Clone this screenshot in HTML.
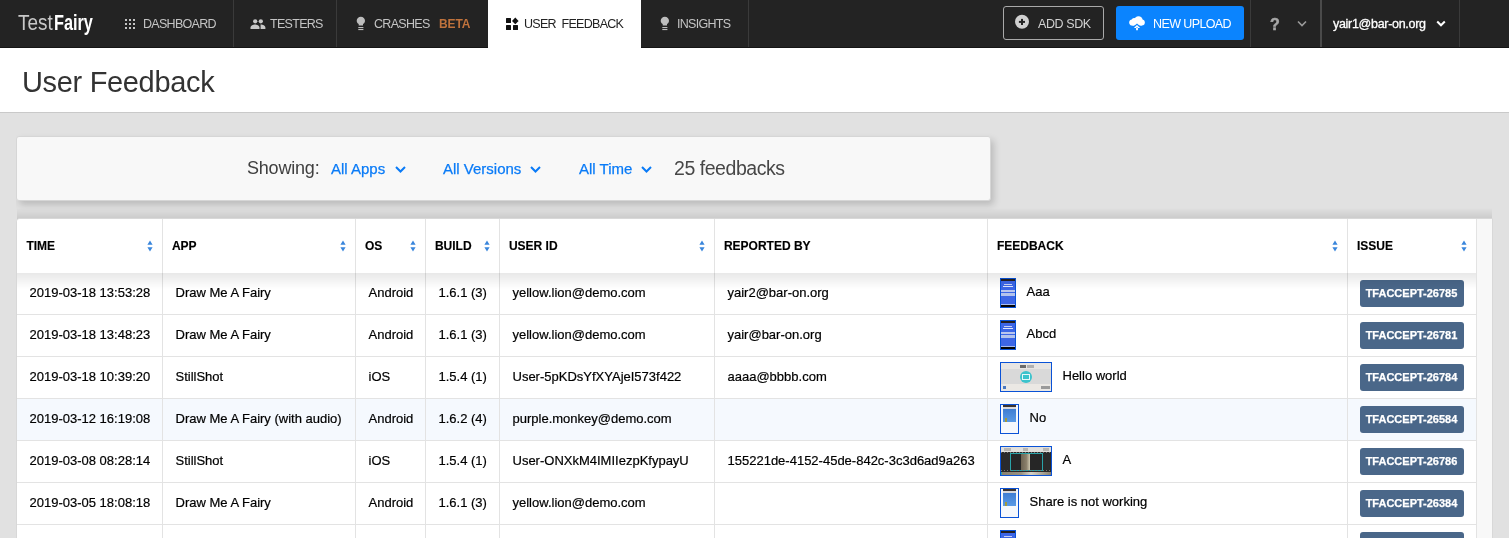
<!DOCTYPE html>
<html><head><meta charset="utf-8">
<style>
*{box-sizing:border-box;margin:0;padding:0}
html,body{width:1509px;height:538px;overflow:hidden;background:#e1e1e1;font-family:"Liberation Sans",sans-serif;position:relative}
.abs{position:absolute;white-space:pre}
#nav{position:absolute;left:0;top:0;width:1509px;height:48px;background:#232323;border-bottom:1px solid #151515}
.vd{position:absolute;top:0;width:1px;height:47px;background:#3a3a3a}
.ni{position:absolute;top:17px;font-size:12.5px;line-height:14px;color:#c4c4c4;letter-spacing:-0.7px;white-space:pre}
#hdr{position:absolute;left:0;top:48px;width:1509px;height:65px;background:#fff;border-bottom:1px solid #c9c9c9}
#filter{position:absolute;left:16px;top:136px;width:975px;height:65px;background:#f8f8f8;border:1px solid #d6d6d6;border-radius:3px;box-shadow:3px 4px 7px rgba(0,0,0,0.17)}
.link{color:#0a7bf7;-webkit-text-stroke:0.25px #0a7bf7}
.chev{position:absolute}
#tbl{position:absolute;left:16px;top:218px;width:1477px;height:330px;background:#f8f8f8;border:1px solid #d8d8d8;border-radius:4px 0 0 0;overflow:hidden}
table{border-collapse:collapse;table-layout:fixed;position:absolute;left:0;top:0;background:#fff}
th{height:54px;text-align:left;font-size:12px;font-weight:bold;color:#000;-webkit-text-stroke:0.15px #000;padding:0 0 0 9.4px;border-left:1px solid #e3e3e3;position:relative;vertical-align:middle}
th:first-child{border-left:none}
td{height:42px;font-size:13px;color:#000;-webkit-text-stroke:0.2px #000;padding:0 0 2px 13px;border-left:1px solid #e3e3e3;border-bottom:1px solid #e3e3e3;vertical-align:middle;white-space:nowrap;overflow:hidden}
td:first-child{border-left:none;padding-left:12.5px}
tr.hl td{background:#f5f9fe}
tbody tr:first-child td{height:41px}
td:nth-child(7),td:nth-child(8){padding-left:12px}
.sort{position:absolute;right:9px;top:21px;width:6px;height:12px}
th:last-child .sort{right:9.5px}
.badge{display:inline-block;position:relative;top:1px;width:104px;height:27px;background:#4a6789;border-radius:3px;color:#fff;font-weight:bold;font-size:11px;line-height:27px;-webkit-text-stroke:0.25px #fff;text-align:center;vertical-align:middle}
.th1{display:inline-block;vertical-align:middle;border:1px solid #0a52d6;margin-right:11px;position:relative;top:1px}
.fb{vertical-align:middle;position:relative;top:-1px}
.th1 i{position:absolute;left:0;width:100%;display:block}
</style></head><body>
<div id="wrap" style="position:absolute;left:0;top:0;width:1509px;height:538px;will-change:transform">
<div id="nav">
  <div class="abs" style="left:18px;top:9.5px;font-size:22px;line-height:26px;color:#c8c8c8;transform-origin:0 0;transform:scaleX(0.86)">Test</div>
  <div class="abs" style="left:53.5px;top:9.5px;font-size:22px;line-height:26px;color:#fff;font-weight:bold;transform-origin:0 0;transform:scaleX(0.74)">Fairy</div>
  <!-- grid icon -->
  <svg class="abs" style="left:124px;top:18px" width="12" height="12" viewBox="0 0 12 12" fill="#c4c4c4">
    <rect x="1" y="1" width="2" height="2"/><rect x="5" y="1" width="2" height="2"/><rect x="9" y="1" width="2" height="2"/>
    <rect x="1" y="5" width="2" height="2"/><rect x="5" y="5" width="2" height="2"/><rect x="9" y="5" width="2" height="2"/>
    <rect x="1" y="9" width="2" height="2"/><rect x="5" y="9" width="2" height="2"/><rect x="9" y="9" width="2" height="2"/>
  </svg>
  <div class="ni" style="left:143px">DASHBOARD</div>
  <div class="vd" style="left:233px"></div>
  <!-- people icon -->
  <svg class="abs" style="left:250px;top:18px" width="16" height="12" viewBox="0 0 16 12" fill="#c8c8c8">
    <circle cx="5.2" cy="3.3" r="2.15"/><circle cx="10.8" cy="3.3" r="2.15"/>
    <path d="M0.5 11 V9.6 C0.5 7.6 3.2 6.5 5 6.5 C6.8 6.5 9.5 7.6 9.5 9.6 V11 Z"/>
    <path d="M10.5 6.6 C10.6 6.55 10.7 6.5 10.9 6.5 C12.7 6.5 15.4 7.6 15.4 9.6 V11 H10.6 V9.6 C10.6 8.4 10.6 7.4 10.5 6.6 Z"/>
  </svg>
  <div class="ni" style="left:270px">TESTERS</div>
  <div class="vd" style="left:336px"></div>
  <!-- bulb -->
  <svg class="abs" style="left:356px;top:16px" width="10" height="15" viewBox="0 0 10 15" fill="#bdbdbd">
    <path d="M4.85 0.7 C7.2 0.7 9 2.5 9 4.8 C9 6.3 8.2 7.5 7 8.1 V9.5 H2.7 V8.1 C1.5 7.5 0.7 6.3 0.7 4.8 C0.7 2.5 2.5 0.7 4.85 0.7 Z"/>
    <rect x="2.3" y="11" width="5.1" height="1.1"/><rect x="2.3" y="13" width="5.1" height="1.1"/>
  </svg>
  <div class="ni" style="left:374px">CRASHES</div>
  <div class="ni" style="left:439px;font-size:12px;font-weight:bold;color:#bf723c;letter-spacing:-0.1px">BETA</div>
  <div class="abs" style="left:488px;top:0;width:153px;height:48px;background:#fff"></div>
  <!-- widgets icon -->
  <svg class="abs" style="left:505px;top:17px" width="14" height="14" viewBox="0 0 14 14" fill="#111">
    <rect x="1" y="1" width="5" height="5" rx="0.5"/><rect x="1" y="8" width="5" height="5" rx="0.5"/><rect x="8" y="8" width="5" height="5" rx="0.5"/>
    <path d="M10.3 0.6 L13.6 3.9 L10.3 7.2 L7 3.9 Z"/>
  </svg>
  <div class="ni" style="left:524px;color:#222">USER  FEEDBACK</div>
  <svg class="abs" style="left:660px;top:16px" width="10" height="15" viewBox="0 0 10 15" fill="#bdbdbd">
    <path d="M4.85 0.7 C7.2 0.7 9 2.5 9 4.8 C9 6.3 8.2 7.5 7 8.1 V9.5 H2.7 V8.1 C1.5 7.5 0.7 6.3 0.7 4.8 C0.7 2.5 2.5 0.7 4.85 0.7 Z"/>
    <rect x="2.3" y="11" width="5.1" height="1.1"/><rect x="2.3" y="13" width="5.1" height="1.1"/>
  </svg>
  <div class="ni" style="left:677px">INSIGHTS</div>
  <div class="vd" style="left:748px"></div>

  <!-- ADD SDK -->
  <div class="abs" style="left:1003px;top:6px;width:101px;height:34px;border:1px solid #a9a9a9;border-radius:3px"></div>
  <svg class="abs" style="left:1014px;top:14px" width="16" height="16" viewBox="0 0 16 16">
    <circle cx="8" cy="7.8" r="7" fill="#d0d0d0"/><rect x="7" y="4.9" width="2" height="6.1" fill="#232323"/><rect x="4.9" y="6.9" width="6.1" height="2" fill="#232323"/>
  </svg>
  <div class="ni" style="left:1038px;color:#d2d2d2;letter-spacing:-0.4px">ADD SDK</div>
  <!-- NEW UPLOAD -->
  <div class="abs" style="left:1116px;top:6px;width:128px;height:34px;background:#0b84fe;border-radius:3px"></div>
  <svg class="abs" style="left:1128px;top:14px" width="18" height="18" viewBox="0 0 18 18">
    <g fill="#fff"><circle cx="4.3" cy="8.5" r="3.1"/><circle cx="10.5" cy="6.4" r="4.2"/><circle cx="13.8" cy="8.6" r="3"/><circle cx="6.2" cy="6.6" r="2.6"/><rect x="4.3" y="8" width="9.5" height="3.6"/></g>
    <path d="M9 9.4 L5.2 12.8 H12.8 Z" fill="#0b84fe"/>
    <path d="M9 10.9 L5.9 14 H12.1 Z M8.1 13.6 H9.9 V16.2 H8.1 Z" fill="#fff"/>
  </svg>
  <div class="ni" style="left:1153px;color:#fff;letter-spacing:-0.6px">NEW UPLOAD</div>
  <div class="vd" style="left:1250px"></div>
  <div class="ni" style="left:1270px;top:16px;font-size:16px;line-height:18px;font-weight:bold;color:#a8a8a8;-webkit-text-stroke:0.5px #a8a8a8">?</div>
  <svg class="abs" style="left:1297px;top:20px" width="10" height="8" viewBox="0 0 10 8"><path d="M1 1.5 L5 5.5 L9 1.5" stroke="#9a9a9a" stroke-width="1.6" fill="none"/></svg>
  <div class="vd" style="left:1320px;width:2px;background:#4a4a4a"></div>
  <div class="ni" style="left:1333px;color:#fff;letter-spacing:-0.3px;-webkit-text-stroke:0.3px #fff">yair1@bar-on.org</div>
  <svg class="abs" style="left:1436px;top:20px" width="10" height="8" viewBox="0 0 10 8"><path d="M1.2 1.5 L5 5.3 L8.8 1.5" stroke="#fff" stroke-width="2" fill="none"/></svg>
  <div class="vd" style="left:1459px"></div>
</div>

<div id="hdr">
  <div class="abs" style="left:22px;top:17.5px;font-size:29px;line-height:32px;color:#333;letter-spacing:-0.33px">User Feedback</div>
</div>

<div id="filter">
  <div class="abs" style="left:230px;top:20px;font-size:18px;line-height:22px;color:#404040;letter-spacing:-0.2px">Showing:</div>
  <div class="abs link" style="left:314px;top:23px;font-size:15px;line-height:18px">All Apps</div>
  <svg class="abs" style="left:378px;top:29px" width="11" height="8" viewBox="0 0 11 8"><path d="M1 1 L5.5 5.5 L10 1" stroke="#0a7bf7" stroke-width="2" fill="none"/></svg>
  <div class="abs link" style="left:426px;top:23px;font-size:15px;line-height:18px">All Versions</div>
  <svg class="abs" style="left:513px;top:29px" width="11" height="8" viewBox="0 0 11 8"><path d="M1 1 L5.5 5.5 L10 1" stroke="#0a7bf7" stroke-width="2" fill="none"/></svg>
  <div class="abs link" style="left:562px;top:23px;font-size:15px;line-height:18px">All Time</div>
  <svg class="abs" style="left:624px;top:29px" width="11" height="8" viewBox="0 0 11 8"><path d="M1 1 L5.5 5.5 L10 1" stroke="#0a7bf7" stroke-width="2" fill="none"/></svg>
  <div class="abs" style="left:657px;top:20px;font-size:19.5px;line-height:22px;color:#474747;letter-spacing:-0.45px">25 feedbacks</div>
</div>

<div style="position:absolute;left:17px;top:208px;width:1475px;height:11px;background:linear-gradient(rgba(0,0,0,0),rgba(0,0,0,0.1))"></div>
<div style="position:absolute;left:0;top:128px;width:16px;height:95px;background:#e1e1e1"></div>
<div id="tbl">
<table>
<colgroup><col style="width:145px"><col style="width:193px"><col style="width:70px"><col style="width:74px"><col style="width:215px"><col style="width:273px"><col style="width:360px"><col style="width:129px"></colgroup>
<thead><tr>
<th>TIME<svg class="sort" width="6" height="12" viewBox="0 0 6 12"><path d="M3 0.6 L5.6 4.8 H0.4 Z M3 11.4 L5.6 7.2 H0.4 Z" fill="#3a86dc"/></svg></th>
<th>APP<svg class="sort" width="6" height="12" viewBox="0 0 6 12"><path d="M3 0.6 L5.6 4.8 H0.4 Z M3 11.4 L5.6 7.2 H0.4 Z" fill="#3a86dc"/></svg></th>
<th>OS<svg class="sort" width="6" height="12" viewBox="0 0 6 12"><path d="M3 0.6 L5.6 4.8 H0.4 Z M3 11.4 L5.6 7.2 H0.4 Z" fill="#3a86dc"/></svg></th>
<th>BUILD<svg class="sort" width="6" height="12" viewBox="0 0 6 12"><path d="M3 0.6 L5.6 4.8 H0.4 Z M3 11.4 L5.6 7.2 H0.4 Z" fill="#3a86dc"/></svg></th>
<th>USER ID<svg class="sort" width="6" height="12" viewBox="0 0 6 12"><path d="M3 0.6 L5.6 4.8 H0.4 Z M3 11.4 L5.6 7.2 H0.4 Z" fill="#3a86dc"/></svg></th>
<th>REPORTED BY</th>
<th>FEEDBACK<svg class="sort" width="6" height="12" viewBox="0 0 6 12"><path d="M3 0.6 L5.6 4.8 H0.4 Z M3 11.4 L5.6 7.2 H0.4 Z" fill="#3a86dc"/></svg></th>
<th>ISSUE<svg class="sort" width="6" height="12" viewBox="0 0 6 12"><path d="M3 0.6 L5.6 4.8 H0.4 Z M3 11.4 L5.6 7.2 H0.4 Z" fill="#3a86dc"/></svg></th>
</tr></thead>
<tbody>
<tr><td>2019-03-18 13:53:28</td><td>Draw Me A Fairy</td><td>Android</td><td>1.6.1 (3)</td><td>yellow.lion@demo.com</td><td>yair2@bar-on.org</td><td><span class="th1" style="width:16px;height:30px;background:#3d66e6"><i style="top:0;height:2px;background:#231f1f"></i><i style="left:3px;width:8px;top:5px;height:1px;background:#c9d3f5"></i><i style="left:2px;width:10px;top:7px;height:1px;background:#dfe6fb"></i><i style="top:11px;height:2px;background:#b9c6ee"></i><i style="top:14px;height:3px;background:#b3c3ec"></i><i style="top:25px;height:1px;background:#a9bdf0"></i><i style="top:26px;height:2px;background:#050505"></i></span><span class="fb">Aaa</span></td><td><span class="badge">TFACCEPT-26785</span></td></tr>
<tr><td>2019-03-18 13:48:23</td><td>Draw Me A Fairy</td><td>Android</td><td>1.6.1 (3)</td><td>yellow.lion@demo.com</td><td>yair@bar-on.org</td><td><span class="th1" style="width:16px;height:30px;background:#3d66e6"><i style="top:0;height:2px;background:#231f1f"></i><i style="left:3px;width:8px;top:5px;height:1px;background:#c9d3f5"></i><i style="left:2px;width:10px;top:7px;height:1px;background:#dfe6fb"></i><i style="top:11px;height:2px;background:#b9c6ee"></i><i style="top:14px;height:3px;background:#b3c3ec"></i><i style="top:25px;height:1px;background:#a9bdf0"></i><i style="top:26px;height:2px;background:#050505"></i></span><span class="fb">Abcd</span></td><td><span class="badge">TFACCEPT-26781</span></td></tr>
<tr><td>2019-03-18 10:39:20</td><td>StillShot</td><td>iOS</td><td>1.5.4 (1)</td><td>User-5pKDsYfXYAjeI573f422</td><td>aaaa@bbbb.com</td><td><span class="th1" style="width:52px;height:30px;background:#d9d9d9"><i style="top:0;height:6px;background:#e7e5e3"></i><i style="left:19px;width:6px;top:2px;height:3px;background:#6a6a6a"></i><i style="left:26px;width:7px;top:2px;height:3px;background:#b0b0b0"></i><i style="left:19px;width:12px;top:8px;height:12px;border-radius:6px;background:#3cc3cc"></i><i style="left:21px;width:8px;top:11px;height:6px;border:1px solid #e6f7f8;background:transparent"></i><i style="top:21px;height:7px;background:#ebe8e4"></i><i style="left:2px;width:3px;top:23px;height:3px;background:#4a78c0"></i><i style="left:40px;width:9px;top:23px;height:3px;background:#9a9a9a"></i></span><span class="fb">Hello world</span></td><td><span class="badge">TFACCEPT-26784</span></td></tr>
<tr class="hl"><td>2019-03-12 16:19:08</td><td>Draw Me A Fairy (with audio)</td><td>Android</td><td>1.6.2 (4)</td><td>purple.monkey@demo.com</td><td></td><td><span class="th1" style="width:19px;height:30px;background:#f6f8fc"><i style="left:2px;width:13px;top:0;height:2px;background:#3a3230"></i><i style="left:2px;width:13px;top:2px;height:2px;background:#d8d8dc"></i><i style="left:2px;width:13px;top:4px;height:13px;background:linear-gradient(#3f7dd2,#5a9ae6)"></i><i style="left:4px;width:2px;top:13px;height:4px;background:#a49a3a"></i></span><span class="fb">No</span></td><td><span class="badge">TFACCEPT-26584</span></td></tr>
<tr><td>2019-03-08 08:28:14</td><td>StillShot</td><td>iOS</td><td>1.5.4 (1)</td><td>User-ONXkM4IMIIezpKfypayU</td><td>155221de-4152-45de-842c-3c3d6ad9a263</td><td><span class="th1" style="width:52px;height:30px;background:#2a2a2a"><i style="top:0;height:5px;background:#e2e0dc"></i><i style="left:3px;width:7px;top:1px;height:3px;background:#b8b6b2"></i><i style="left:22px;width:5px;top:1px;height:3px;background:#b8b6b2"></i><i style="left:42px;width:6px;top:1px;height:3px;background:#b8b6b2"></i><i style="left:9px;width:33px;top:6px;height:18px;border:1px solid #2aa3a8;background:#262626"></i><i style="left:20px;width:9px;top:7px;height:16px;background:linear-gradient(90deg,#6d6352,#8b806b 60%,#cfc8b0)"></i><i style="top:5px;height:1px;background:repeating-linear-gradient(90deg,#777 0 1px,transparent 1px 3px)"></i><i style="top:23px;height:1px;background:repeating-linear-gradient(90deg,#777 0 1px,transparent 1px 3px)"></i><i style="top:25px;height:3px;background:linear-gradient(90deg,#2aa3a8 0 1px,#8a8270 1px,#9a9280 40%,#d6d2c6 60%,#8a8270)"></i></span><span class="fb">A</span></td><td><span class="badge">TFACCEPT-26786</span></td></tr>
<tr><td>2019-03-05 18:08:18</td><td>Draw Me A Fairy</td><td>Android</td><td>1.6.1 (3)</td><td>yellow.lion@demo.com</td><td></td><td><span class="th1" style="width:19px;height:30px;background:#f6f8fc"><i style="left:2px;width:13px;top:0;height:2px;background:#3a3230"></i><i style="left:2px;width:13px;top:2px;height:2px;background:#d8d8dc"></i><i style="left:2px;width:13px;top:4px;height:13px;background:linear-gradient(#3f7dd2,#5a9ae6)"></i><i style="left:4px;width:2px;top:13px;height:4px;background:#a49a3a"></i></span><span class="fb">Share is not working</span></td><td><span class="badge">TFACCEPT-26384</span></td></tr>
<tr><td></td><td></td><td></td><td></td><td></td><td></td><td><span class="th1" style="width:16px;height:30px;background:#3d66e6"><i style="top:0;height:2px;background:#231f1f"></i><i style="left:3px;width:8px;top:5px;height:1px;background:#c9d3f5"></i></span></td><td><span class="badge"></span></td></tr>
</tbody>
</table>
<div style="position:absolute;left:0;top:54px;width:1459px;height:16px;background:linear-gradient(rgba(0,0,0,0.09),rgba(0,0,0,0))"></div>
<div style="position:absolute;left:1459px;top:0;width:1px;height:330px;background:#e3e3e3"></div>
</div>
</div>
</body></html>
